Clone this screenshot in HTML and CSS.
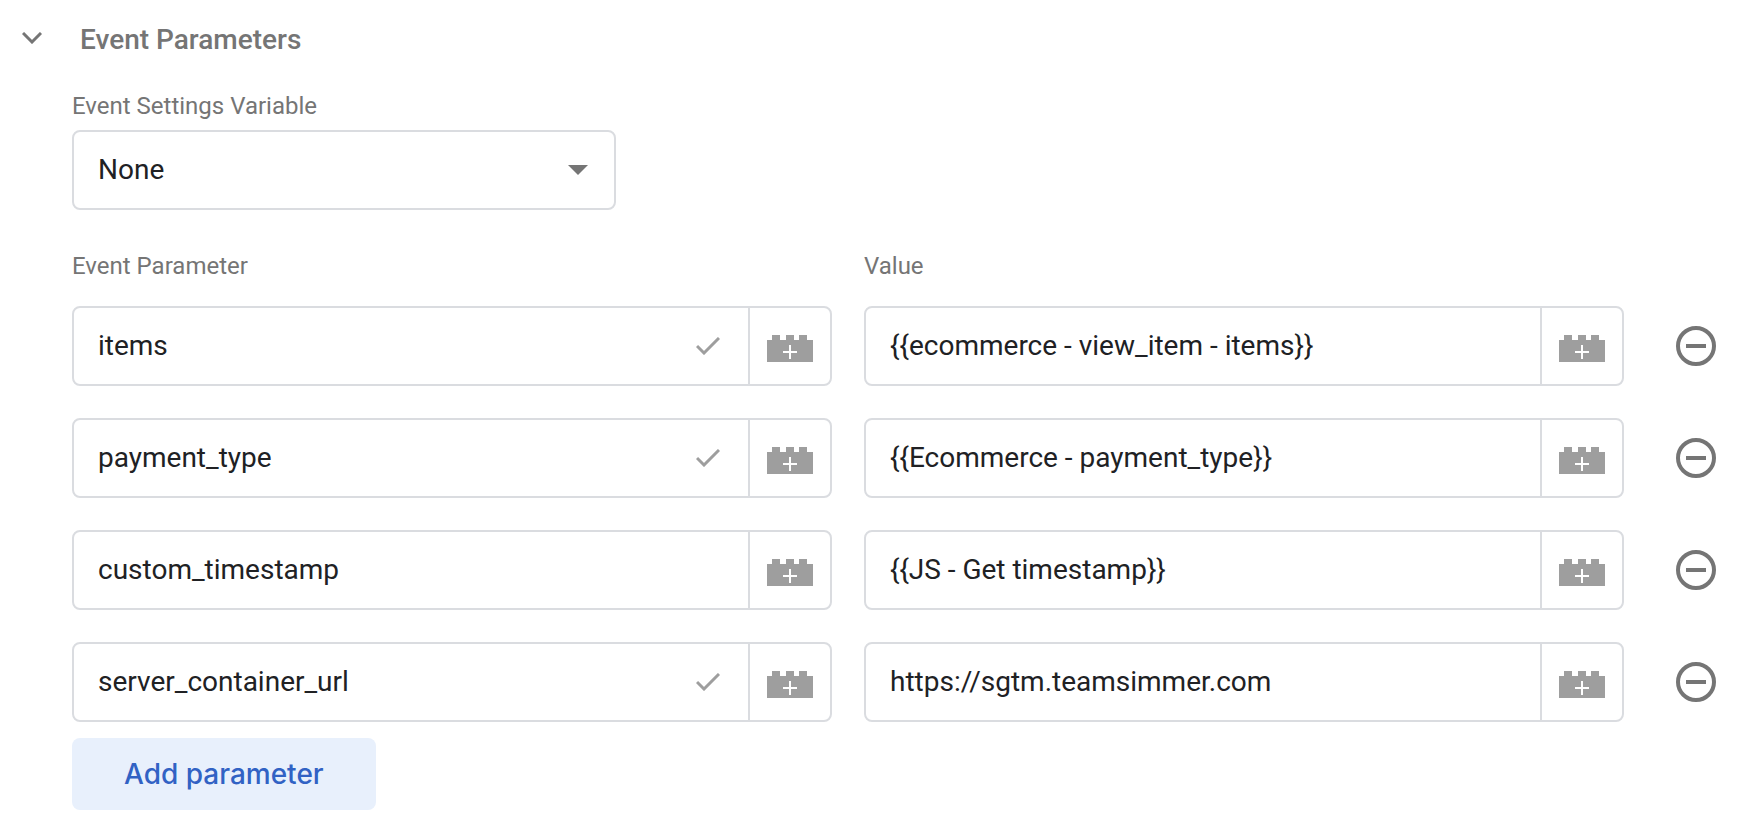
FILE: index.html
```html
<!DOCTYPE html>
<html lang="en">

<head>
  <meta charset="UTF-8">
  <meta name="viewport" content="width=device-width, initial-scale=1.0">
  <title>Event Parameters</title>
  <link rel="stylesheet" href="styles.css">
</head>

<body>
  <!-- shared icons -->
  <svg class="sprite" aria-hidden="true">
    <symbol id="brick" viewBox="0 0 46 32">
      <path fill="#9e9e9e" d="M0 10H5V5H13V10H19V5H27V10H32V5H40V10H46V32H0Z" />
      <path stroke="#fff" stroke-width="2" d="M23 15V29M16 22H30" />
    </symbol>
    <symbol id="check" viewBox="0 0 24 18">
      <path fill="none" stroke="#9e9e9e" stroke-width="3" d="M1 9L8 16L23 1" />
    </symbol>
    <symbol id="minus" viewBox="0 0 40 40">
      <circle cx="20" cy="20" r="18" fill="none" stroke="#757575" stroke-width="4" />
      <path stroke="#757575" stroke-width="4" d="M10 20H30" />
    </symbol>
  </svg>

  <section class="section">
    <header class="section-header">
      <button type="button" class="toggle" aria-label="Collapse" aria-expanded="true">
        <svg width="20" height="12" viewBox="0 0 20 12">
          <path fill="none" stroke="#757575" stroke-width="3" d="M1 1L10 10L19 1" />
        </svg>
      </button>
      <h2 class="title">Event Parameters</h2>
    </header>

    <form class="section-body">
      <label class="label" for="settings">Event Settings Variable</label>
      <div class="select-box">
        <select id="settings" class="select">
          <option>None</option>
        </select>
        <svg class="arrow" width="20" height="10" viewBox="0 0 20 10">
          <path fill="#757575" d="M0 0H20L10 10Z" />
        </svg>
      </div>

      <div class="params">
        <span class="label" id="col-name">Event Parameter</span>
        <span class="label" id="col-value">Value</span>
        <span></span>

        <div class="field">
          <input type="text" class="input" value="items" aria-labelledby="col-name">
          <svg class="check"><use href="#check" /></svg>
          <button type="button" class="brick-btn" aria-label="Insert variable"><svg class="brick"><use href="#brick" /></svg></button>
        </div>
        <div class="field">
          <input type="text" class="input" value="{{ecommerce - view_item - items}}" aria-labelledby="col-value">
          <button type="button" class="brick-btn" aria-label="Insert variable"><svg class="brick"><use href="#brick" /></svg></button>
        </div>
        <button type="button" class="remove" aria-label="Remove"><svg class="minus"><use href="#minus" /></svg></button>

        <div class="field">
          <input type="text" class="input" value="payment_type" aria-labelledby="col-name">
          <svg class="check"><use href="#check" /></svg>
          <button type="button" class="brick-btn" aria-label="Insert variable"><svg class="brick"><use href="#brick" /></svg></button>
        </div>
        <div class="field">
          <input type="text" class="input" value="{{Ecommerce - payment_type}}" aria-labelledby="col-value">
          <button type="button" class="brick-btn" aria-label="Insert variable"><svg class="brick"><use href="#brick" /></svg></button>
        </div>
        <button type="button" class="remove" aria-label="Remove"><svg class="minus"><use href="#minus" /></svg></button>

        <div class="field">
          <input type="text" class="input" value="custom_timestamp" aria-labelledby="col-name">
          <button type="button" class="brick-btn" aria-label="Insert variable"><svg class="brick"><use href="#brick" /></svg></button>
        </div>
        <div class="field">
          <input type="text" class="input" value="{{JS - Get timestamp}}" aria-labelledby="col-value">
          <button type="button" class="brick-btn" aria-label="Insert variable"><svg class="brick"><use href="#brick" /></svg></button>
        </div>
        <button type="button" class="remove" aria-label="Remove"><svg class="minus"><use href="#minus" /></svg></button>

        <div class="field">
          <input type="text" class="input" value="server_container_url" aria-labelledby="col-name">
          <svg class="check"><use href="#check" /></svg>
          <button type="button" class="brick-btn" aria-label="Insert variable"><svg class="brick"><use href="#brick" /></svg></button>
        </div>
        <div class="field">
          <input type="text" class="input" value="https://sgtm.teamsimmer.com" aria-labelledby="col-value">
          <button type="button" class="brick-btn" aria-label="Insert variable"><svg class="brick"><use href="#brick" /></svg></button>
        </div>
        <button type="button" class="remove" aria-label="Remove"><svg class="minus"><use href="#minus" /></svg></button>
      </div>

      <button type="button" class="add">Add parameter</button>
    </form>
  </section>
</body>

</html>
```

FILE: styles.css
```css
* {
  box-sizing: border-box;
}

body {
  margin: 0;
  background-color: #fff;
  color: #202124;
  font-family: Roboto, "Liberation Sans", sans-serif;
  font-size: 28px;
}

svg {
  display: block;
  flex: none;
}

button {
  padding: 0;
  border: none;
  background: none;
  cursor: pointer;
}

.sprite {
  position: absolute;
  width: 0;
  height: 0;
}

.section {
  padding: 24px 26px 16px 0;
}

.section-header {
  display: flex;
  align-items: center;
  gap: 38px;
  padding-left: 22px;
}

.toggle {
  padding-bottom: 4px;
}

.title {
  margin: 0;
  color: #757575;
  font-size: 28px;
  font-weight: 500;
  line-height: 32px;
}

.section-body {
  padding: 36px 0 0 72px;
}

.label {
  display: block;
  color: #757575;
  font-size: 24px;
  line-height: 28px;
}

.select-box {
  display: grid;
  align-items: center;
  max-width: 544px;
  margin: 10px 0 42px;
}

.select {
  grid-area: 1 / 1;
  appearance: none;
  width: 100%;
  height: 80px;
  padding: 0 64px 2px 24px;
  border: 2px solid #dadce0;
  border-radius: 8px;
  background-color: #fff;
  color: inherit;
  font: inherit;
}

.arrow {
  grid-area: 1 / 1;
  justify-self: end;
  margin-right: 28px;
  pointer-events: none;
}

.params {
  display: grid;
  grid-template-columns: 1fr 1fr 60px;
  gap: 32px;
}

.params .label {
  margin-bottom: -6px;
}

.field {
  display: flex;
  align-items: center;
  height: 80px;
  border: 2px solid #dadce0;
  border-radius: 8px;
}

.input {
  flex: 1;
  min-width: 0;
  height: 100%;
  padding: 0 24px 2px;
  border: none;
  outline: none;
  background: none;
  color: inherit;
  font: inherit;
}

.check {
  width: 24px;
  height: 18px;
  margin-right: 28px;
}

.brick-btn {
  display: flex;
  flex: none;
  align-items: center;
  justify-content: center;
  width: 82px;
  height: 100%;
  border-left: 2px solid #dadce0;
}

.brick {
  width: 46px;
  height: 32px;
}

.remove {
  display: flex;
  align-items: center;
  justify-content: flex-end;
}

.minus {
  width: 40px;
  height: 40px;
}

.add {
  display: block;
  height: 72px;
  margin-top: 16px;
  padding: 0 52px;
  border-radius: 8px;
  background-color: #e8f0fc;
  color: #3162c4;
  font-family: Inter, Roboto, sans-serif;
  font-size: 28px;
  font-weight: 500;
}
```
